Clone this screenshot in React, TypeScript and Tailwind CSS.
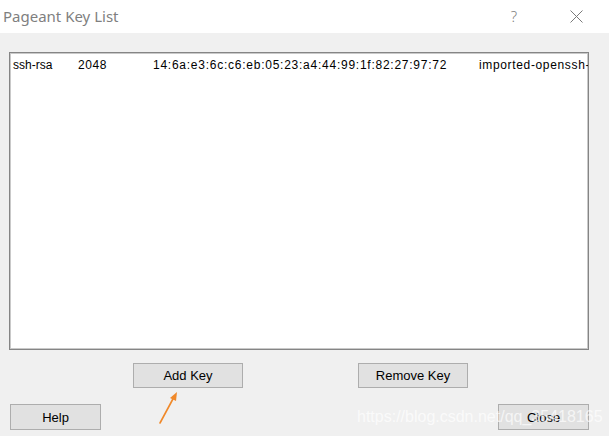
import React from "react";

export default function App() {
  return (
    <div className="relative w-[609px] h-[436px] overflow-hidden bg-[#f0f0f0]" style={{ fontFamily: '"Liberation Sans", Arial, sans-serif' }}>
      {/* title bar */}
      <div className="h-[33px] bg-white flex items-center justify-between">
        <div className="pl-[3px] text-[15px] text-[#7f7f7f] leading-none" style={{ fontFamily: '"Noto Sans", "Open Sans", sans-serif' }}>
          Pageant Key List
        </div>
        <div className="flex items-center">
          <div className="w-[46px] flex justify-center text-[15px] text-[#7f7f7f] leading-none" style={{ fontFamily: '"Noto Sans", sans-serif', fontWeight: 300 }}>?</div>
          <div className="w-[14px]" />
          <div className="w-[58px] flex justify-center pr-[8px]">
            <svg width="13" height="13" viewBox="0 0 13 13">
              <path d="M0.5 0.5 L12.5 12.5 M12.5 0.5 L0.5 12.5" stroke="#7a7a7a" strokeWidth="1" fill="none" />
            </svg>
          </div>
        </div>
      </div>

      {/* list box */}
      <div className="ml-[9px] mt-[19px] w-[580px] h-[298px] bg-white border border-[#858585] shadow-[inset_0_0_0_1px_#c9c9c9] overflow-hidden">
        <div className="flex items-center h-[22px] text-[12px] text-black whitespace-nowrap mt-[1px]">
          <span className="pl-[3px] w-[68px] shrink-0">ssh-rsa</span>
          <span className="w-[75px] shrink-0 tracking-[0.6px]">2048</span>
          <span className="w-[326px] shrink-0 tracking-[0.75px]">14:6a:e3:6c:c6:eb:05:23:a4:44:99:1f:82:27:97:72</span>
          <span className="shrink-0 tracking-[0.65px]">imported-openssh-key</span>
        </div>
      </div>

      {/* add / remove */}
      <div className="flex mt-[13px] pl-[133px] gap-[115px]">
        <button className="w-[110px] h-[25px] bg-[#e1e1e1] border border-[#adadad] text-[13px] text-black leading-none">Add Key</button>
        <button className="w-[110px] h-[25px] bg-[#e1e1e1] border border-[#adadad] text-[13px] text-black leading-none">Remove Key</button>
      </div>

      {/* help / close */}
      <div className="flex justify-between mt-[16px] pl-[10px] pr-[20px]">
        <button className="w-[91px] h-[26px] bg-[#e1e1e1] border border-[#adadad] text-[13px] text-black leading-none">Help</button>
        <button className="w-[91px] h-[26px] bg-[#e1e1e1] border border-[#adadad] text-[13px] text-black leading-none">Close</button>
      </div>

      {/* watermark */}
      <div className="absolute left-[357px] top-[407px] text-[16px] leading-[20px] text-white/70 whitespace-nowrap pointer-events-none" style={{ fontFamily: '"Liberation Sans", Arial, sans-serif' }}>
        https://blog.csdn.net/qq_35418165
      </div>

      {/* arrow */}
      <svg className="absolute left-[150px] top-[388px]" width="40" height="40" viewBox="0 0 40 40">
        <path d="M10 35 L24 9" stroke="#f0892a" strokeWidth="1.6" fill="none" strokeLinecap="round" />
        <path d="M27 4 L20 10 L26 13 Z" fill="#f0892a" />
      </svg>
    </div>
  );
}
